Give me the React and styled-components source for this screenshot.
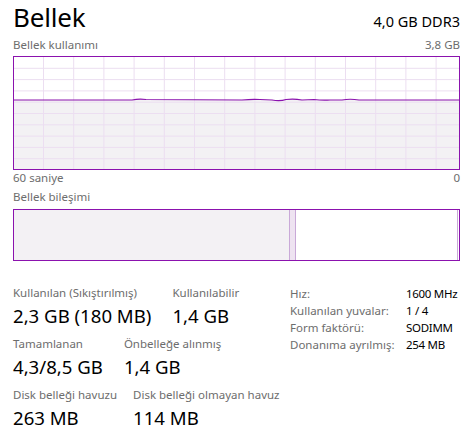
import React from 'react';
import styled, { createGlobalStyle } from 'styled-components';

const GlobalStyle = createGlobalStyle`
  html, body {
    margin: 0;
    padding: 0;
    background: #ffffff;
  }
  body {
    font-family: "Noto Sans", "Open Sans", sans-serif;
    color: #000000;
  }
`;

const PURPLE = '#8b12ae';
const GRID = '#ecdef1';
const FILL = '#f3f1f4';

const Panel = styled.div`
  width: 475px;
  height: 447px;
  box-sizing: border-box;
  padding: 0 15px 0 13px;
  overflow: hidden;
`;

const Header = styled.div`
  display: flex;
  justify-content: space-between;
  align-items: baseline;
  height: 37px;
`;

const Title = styled.h1`
  margin: 0;
  font-size: 26px;
  font-weight: 400;
  line-height: 35px;
  letter-spacing: -0.2px;
`;

const Spec = styled.div`
  font-size: 14.5px;
  line-height: 35px;
`;

const CaptionRow = styled.div`
  display: flex;
  justify-content: space-between;
  font-size: 11.5px;
  line-height: 16px;
  height: ${(p) => p.$h || 19}px;
  color: #6d6d6d;
`;

const ChartBox = styled.div`
  border: 1px solid ${PURPLE};
  height: 112px;
  background: #ffffff;
  svg { display: block; }
`;

const BarBox = styled.div`
  display: flex;
  border: 1px solid ${PURPLE};
  height: 50px;
  margin-bottom: 24px;
`;

const Segment = styled.div`
  width: ${(p) => p.$w}px;
  flex: ${(p) => (p.$grow ? 1 : 'none')};
  background: ${(p) => p.$bg};
  border-right: ${(p) => (p.$line ? '1px solid #c9a9d8' : 'none')};
`;

const Stats = styled.div`
  display: flex;
  align-items: flex-start;
`;

const Main = styled.div`
  width: 277px;
  display: flex;
  flex-direction: column;
  gap: 5px;
`;

const StatRow = styled.div`
  display: flex;
  gap: ${(p) => p.$gap}px;
`;

const Stat = styled.div`
  display: flex;
  flex-direction: column;
`;

const Label = styled.div`
  font-size: 11.5px;
  line-height: 16px;
  color: #6d6d6d;
  white-space: nowrap;
`;

const Value = styled.div`
  font-size: 18.6px;
  line-height: 30px;
  white-space: nowrap;
`;

const Specs = styled.div`
  display: grid;
  grid-template-columns: 116px auto;
  align-content: start;
  font-size: 11.5px;
  line-height: 17px;
`;

const SpecKey = styled.span`
  color: #6d6d6d;
`;

const SpecVal = styled.span`
  color: #000000;
  letter-spacing: -0.3px;
`;

function UsageChart() {
  const w = 445;
  const h = 112;
  const vx = Array.from({ length: 14 }, (_, i) => 29.5 + i * 30.2);
  const hy = Array.from({ length: 9 }, (_, i) => 11.3 * (i + 1));
  // memory usage trace, nearly flat with small ripples
  const line =
    'M0 43 L118 43 Q125 41.5 132 42.5 L228 43 Q238 42 246 42.5 L258 43 Q266 44.5 272 42.5 Q280 41.5 288 43 L300 42.5 Q308 43.5 316 43 L328 43 Q336 41.5 345 43 L445 43';
  return (
    <svg width={w} height={h} viewBox={`0 0 ${w} ${h}`}>
      <path d={`${line} L445 ${h} L0 ${h} Z`} fill={FILL} />
      {vx.map((x) => (
        <line key={x} x1={x} x2={x} y1={0} y2={h} stroke={GRID} strokeWidth="1" />
      ))}
      {hy.map((y) => (
        <line key={y} x1={0} x2={w} y1={y} y2={y} stroke={GRID} strokeWidth="1" />
      ))}
      <path d={line} fill="none" stroke={PURPLE} strokeWidth="1.2" />
    </svg>
  );
}

const rows = [
  {
    gap: 21,
    items: [
      ['Kullanılan (Sıkıştırılmış)', '2,3 GB (180 MB)'],
      ['Kullanılabilir', '1,4 GB'],
    ],
  },
  {
    gap: 21,
    items: [
      ['Tamamlanan', '4,3/8,5 GB'],
      ['Önbelleğe alınmış', '1,4 GB'],
    ],
  },
  {
    gap: 16,
    items: [
      ['Disk belleği havuzu', '263 MB'],
      ['Disk belleği olmayan havuz', '114 MB'],
    ],
  },
];

const specs = [
  ['Hız:', '1600 MHz'],
  ['Kullanılan yuvalar:', '1 / 4'],
  ['Form faktörü:', 'SODIMM'],
  ['Donanıma ayrılmış:', '254 MB'],
];

export default function App() {
  return (
    <Panel>
      <GlobalStyle />
      <Header>
        <Title>Bellek</Title>
        <Spec>4,0 GB DDR3</Spec>
      </Header>
      <CaptionRow>
        <span>Bellek kullanımı</span>
        <span>3,8 GB</span>
      </CaptionRow>
      <ChartBox>
        <UsageChart />
      </ChartBox>
      <CaptionRow $h={19}>
        <span>60 saniye</span>
        <span>0</span>
      </CaptionRow>
      <CaptionRow $h={20}>
        <span>Bellek bileşimi</span>
      </CaptionRow>
      <BarBox>
        <Segment $w={275} $bg={FILL} $line />
        <Segment $w={5} $bg="#eee3f1" $line />
        <Segment $grow $bg="#ffffff" $line />
        <Segment $w={1} $bg="#ffffff" />
      </BarBox>
      <Stats>
        <Main>
          {rows.map((r, i) => (
            <StatRow key={i} $gap={r.gap}>
              {r.items.map(([l, v]) => (
                <Stat key={l}>
                  <Label>{l}</Label>
                  <Value>{v}</Value>
                </Stat>
              ))}
            </StatRow>
          ))}
        </Main>
        <Specs>
          {specs.map(([k, v]) => (
            <React.Fragment key={k}>
              <SpecKey>{k}</SpecKey>
              <SpecVal>{v}</SpecVal>
            </React.Fragment>
          ))}
        </Specs>
      </Stats>
    </Panel>
  );
}
